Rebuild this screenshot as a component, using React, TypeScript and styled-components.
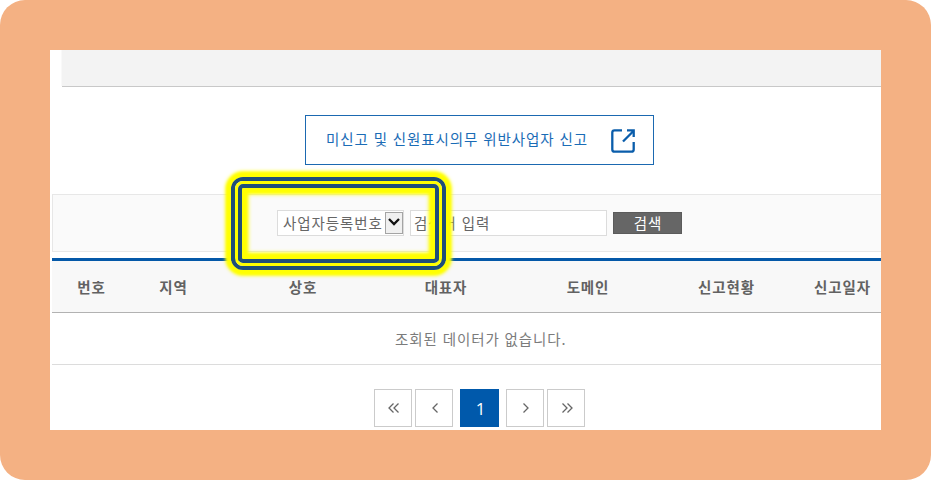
import React from "react";
import styled, { createGlobalStyle, css } from "styled-components";

const GlobalStyle = createGlobalStyle`
  * { box-sizing: border-box; }
  body {
    margin: 0;
    background: #fff;
    font-family: "Noto Sans CJK KR", "Noto Sans", sans-serif;
  }
`;

const Frame = styled.div`
  width: 931px;
  height: 480px;
  padding: 50px;
  border-radius: 25px;
  background: #f4b183;
`;

const Page = styled.main`
  position: relative;
  width: 831px;
  height: 380px;
  overflow: hidden;
  background: #fff;
  display: flex;
  flex-direction: column;
`;

const TopStrip = styled.div`
  flex: none;
  height: 37px;
  margin-left: 12px;
  background: #f3f3f3;
  border-bottom: 1px solid #c8c8c8;
  box-shadow: -1px -1px 0 #f9f9f9;
`;

const ReportLink = styled.a`
  flex: none;
  display: flex;
  align-items: center;
  width: 349px;
  height: 50px;
  margin: 28px 0 0 255px;
  padding: 2px 17px 0 20px;
  justify-content: space-between;
  border: 1px solid #1b69b1;
  color: #1a6cb6;
`;

const Label = styled.span<{ $rise?: number }>`
  display: block;
  flex: none;
  font-size: 14.5px;
  letter-spacing: 0.9px;
  word-spacing: 0.8px;
  line-height: 20px;
  margin-bottom: ${(p) => p.$rise ?? 0}px;
  white-space: nowrap;
`;

const SearchBar = styled.form`
  flex: none;
  display: flex;
  align-items: center;
  height: 58px;
  margin: 29px 0 0 2px;
  padding-left: 224px;
  background: #fafafa;
  border: 1px solid #e7e7e7;
  border-right: 0;
`;

const field = css`
  display: flex;
  align-items: center;
  height: 26px;
  background: #fff;
  border: 1px solid #dcdcdc;
  color: #666;
`;

const SelectBox = styled.div`
  ${field}
  width: 127px;
  padding-left: 5px;
`;

const SelectArrow = styled.span`
  display: flex;
  flex: none;
  align-items: center;
  justify-content: center;
  width: 18px;
  height: 22px;
  margin-left: auto;
  padding-bottom: 1px;
  background: #f0f0f0;
  border: 1px solid #a4a4a4;
`;

const Keyword = styled.div`
  ${field}
  width: 197px;
  margin-left: 6px;
  padding-left: 3px;
`;

const SearchButton = styled.div`
  display: flex;
  align-items: center;
  justify-content: center;
  width: 69px;
  height: 22px;
  margin-left: 6px;
  padding-left: 1px;
  background: #666;
  border: 1px solid #5b5b5b;
  color: #fff;
`;

const Table = styled.section`
  flex: none;
  margin: 6px 0 0 2px;
  border-top: 3px solid #0458a8;
`;

const HeadRow = styled.div`
  display: grid;
  grid-template-columns: 79px 85px 174px 112px 172px 105px 127px;
  align-items: center;
  justify-items: center;
  height: 52px;
  padding-top: 1px;
  background: #f8f8f8;
  border-bottom: 1px solid #b2b2b2;
  color: #626262;
  font-weight: 600;
`;

const EmptyRow = styled.div`
  display: flex;
  align-items: center;
  height: 52px;
  padding-left: 343px;
  border-bottom: 1px solid #dcdcdc;
  color: #7b7b7b;
`;

const Pagination = styled.nav`
  display: flex;
  margin: 24px 0 0 324px;
  gap: 3px;
`;

const PageButton = styled.span<{ $active?: boolean }>`
  display: flex;
  align-items: center;
  justify-content: center;
  flex: none;
  width: ${(p) => (p.$active ? 39 : 38)}px;
  height: 38px;
  margin: 0 ${(p) => (p.$active ? 4 : 0)}px;
  border: 1px solid ${(p) => (p.$active ? "#0059ab" : "#cbcbcb")};
  background: ${(p) => (p.$active ? "#0059ab" : "#fff")};
  color: ${(p) => (p.$active ? "#fff" : "#666")};
  font-family: "Open Sans", sans-serif;
  font-size: 17px;
  line-height: 36px;
  padding: ${(p) => (p.$active ? "1px 0 0 2px" : "0 0 0 1px")};
`;

const Highlight = styled.div`
  position: absolute;
  left: 181px;
  top: 127px;
  width: 215px;
  height: 93px;
  padding: 3px;
  border: 4px solid #1f4e79;
  border-radius: 12px;
  box-shadow: 0 0 4px 5px #ff0, 0 0 3px 5px #ff0;
`;

const HighlightInner = styled.div`
  width: 100%;
  height: 100%;
  border: 4px solid #1f4e79;
  border-radius: 5px;
  box-shadow: 0 0 0 3px #ff0, inset 0 0 4px 6px #ff0, inset 0 0 3px 5px #ff0;
`;

const ExternalIcon = () => (
  <svg width="26" height="26" viewBox="0 0 26 26" fill="none" stroke="#0a5dab" strokeWidth="2.3">
    <path d="M12 2.300H4.500Q2.300 2.300 2.300 4.500v17q0 2.200 2.200 2.200h17q2.200 0 2.200-2.200v-7.500" />
    <path d="M13 13.500 23.500 3" />
    <path d="M17 2.300h6.700v6.700" />
    <path d="M20 2h4v4z" fill="#0a5dab" stroke="none" />
  </svg>
);

const Chevron = ({ double, right }: { double?: boolean; right?: boolean }) => (
  <svg width="12" height="12" viewBox="0 0 12 12" fill="none" stroke="#666" strokeWidth="1.3"
    transform={right ? "scale(-1 1)" : undefined}>
    {double ? <path d="M5.500 1.500 1 6l4.500 4.500M10.500 1.500 6 6l4.500 4.500" /> : <path d="M8.500 1.500 4 6l4.500 4.500" />}
  </svg>
);

const columns = ["번호", "지역", "상호", "대표자", "도메인", "신고현황", "신고일자"];

export default function App() {
  return (
    <>
      <GlobalStyle />
      <Frame>
        <Page>
          <TopStrip />
          <ReportLink>
            <Label $rise={4}>미신고 및 신원표시의무 위반사업자 신고</Label>
            <ExternalIcon />
          </ReportLink>
          <SearchBar>
            <SelectBox>
              <Label $rise={1}>사업자등록번호</Label>
              <SelectArrow>
                <svg width="12" height="9" viewBox="0 0 12 9" fill="none" stroke="#111" strokeWidth="2.300">
                  <path d="m1 1 5 5 5-5" />
                </svg>
              </SelectArrow>
            </SelectBox>
            <Keyword>
              <Label $rise={1}>검색어 입력</Label>
            </Keyword>
            <SearchButton>
              <Label>검색</Label>
            </SearchButton>
          </SearchBar>
          <Table>
            <HeadRow>
              {columns.map((name) => (
                <Label key={name}>{name}</Label>
              ))}
            </HeadRow>
            <EmptyRow>
              <Label>조회된 데이터가 없습니다.</Label>
            </EmptyRow>
          </Table>
          <Pagination>
            <PageButton><Chevron double /></PageButton>
            <PageButton><Chevron /></PageButton>
            <PageButton $active>1</PageButton>
            <PageButton><Chevron right /></PageButton>
            <PageButton><Chevron double right /></PageButton>
          </Pagination>
          <Highlight>
            <HighlightInner />
          </Highlight>
        </Page>
      </Frame>
    </>
  );
}
